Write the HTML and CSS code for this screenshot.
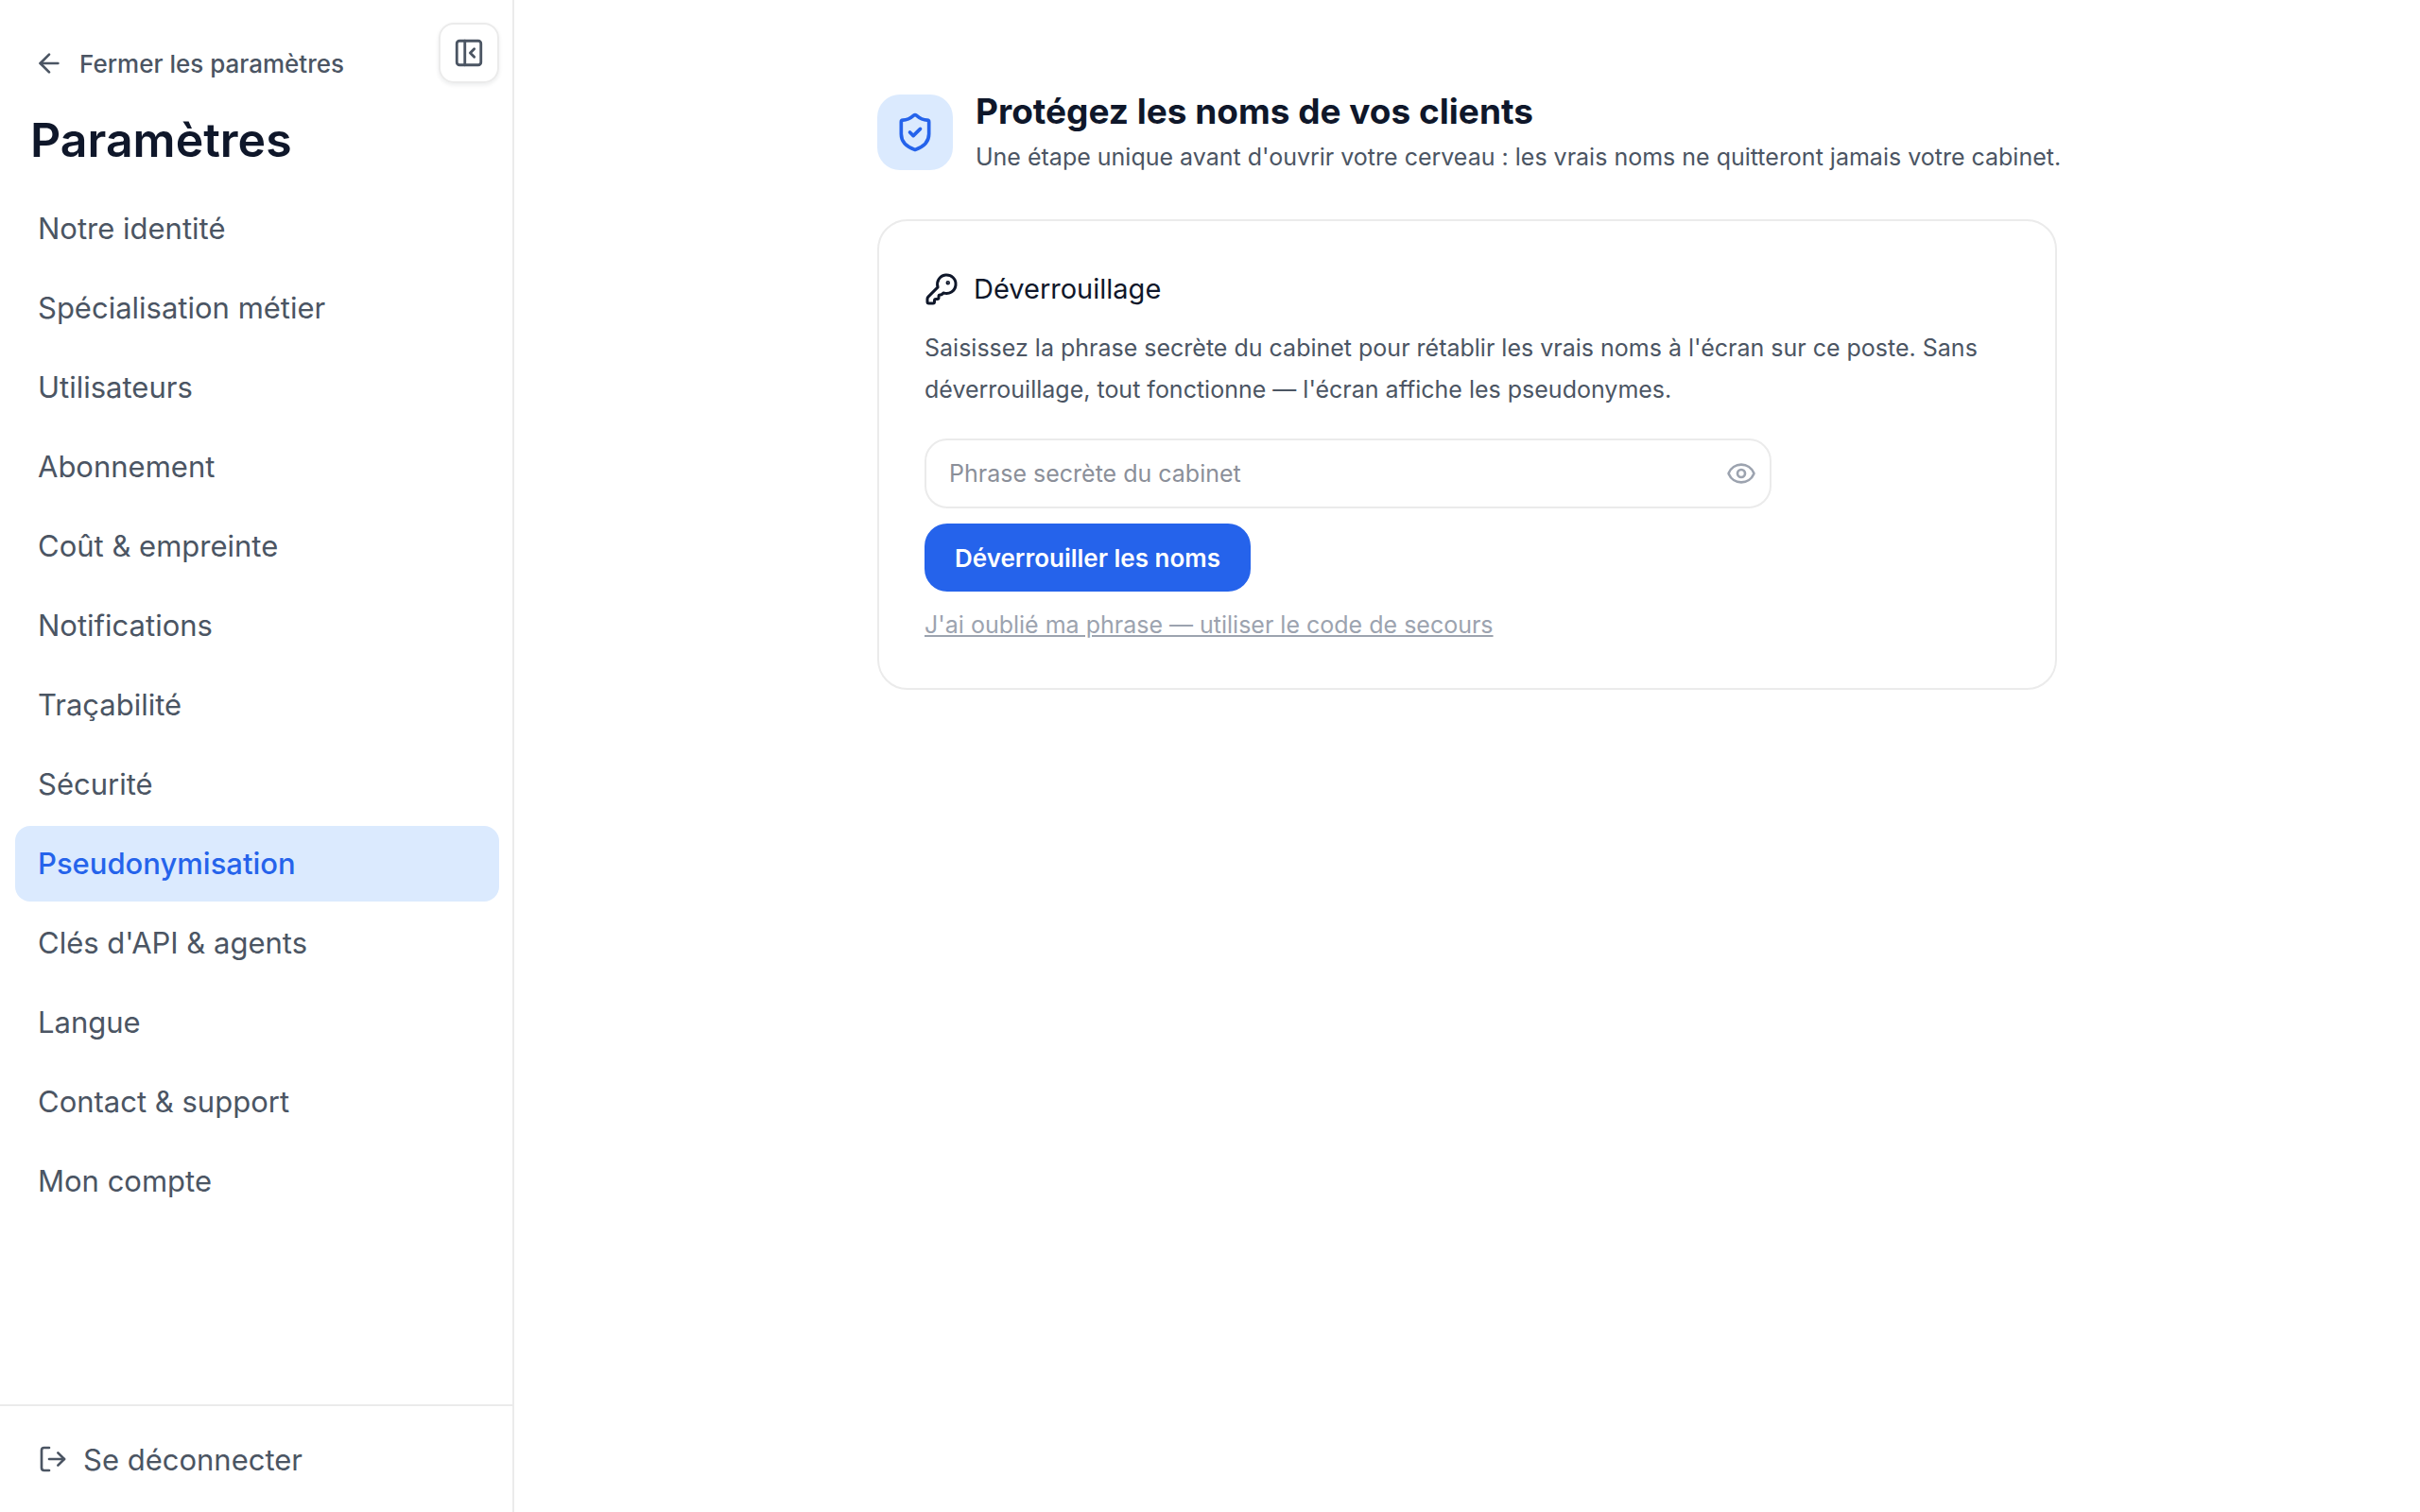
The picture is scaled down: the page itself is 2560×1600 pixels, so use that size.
FILE: index.html
```html
<!DOCTYPE html>
<html lang="fr">

<head>
    <meta charset="UTF-8">
    <meta name="viewport" content="width=device-width, initial-scale=1.0">
    <title>Paramètres</title>
    <link rel="stylesheet" href="styles.css">
</head>

<body>
    <div class="layout">
        <aside class="sidebar">
            <div class="sidebar-top">
                <a href="#" class="back">
                    <svg class="icon" viewBox="0 0 24 24"><path d="m12 19-7-7 7-7"/><path d="M19 12H5"/></svg>
                    Fermer les paramètres
                </a>
                <button type="button" class="collapse" aria-label="Réduire le menu">
                    <svg class="icon" viewBox="0 0 24 24"><rect x="3" y="3" width="18" height="18" rx="2"/><path d="M9 3v18"/><path d="m16 15-3-3 3-3"/></svg>
                </button>
            </div>
            <h1>Paramètres</h1>
            <nav class="menu">
                <a href="#">Notre identité</a>
                <a href="#">Spécialisation métier</a>
                <a href="#">Utilisateurs</a>
                <a href="#">Abonnement</a>
                <a href="#">Coût &amp; empreinte</a>
                <a href="#">Notifications</a>
                <a href="#">Traçabilité</a>
                <a href="#">Sécurité</a>
                <a href="#" class="active" aria-current="page">Pseudonymisation</a>
                <a href="#">Clés d'API &amp; agents</a>
                <a href="#">Langue</a>
                <a href="#">Contact &amp; support</a>
                <a href="#">Mon compte</a>
            </nav>
            <div class="sidebar-bottom">
                <button type="button" class="logout">
                    <svg class="icon" viewBox="0 0 24 24"><path d="M9 21H5a2 2 0 0 1-2-2V5a2 2 0 0 1 2-2h4"/><path d="m16 17 5-5-5-5"/><path d="M21 12H9"/></svg>
                    Se déconnecter
                </button>
            </div>
        </aside>
        <main class="content">
            <div class="page">
                <header class="page-header">
                    <div class="badge">
                        <svg class="icon" viewBox="0 0 24 24"><path d="M20 13c0 5-3.5 7.5-7.66 8.95a1 1 0 0 1-.67-.01C7.5 20.5 4 18 4 13V6a1 1 0 0 1 1-1c2 0 4.5-1.2 6.24-2.72a1.17 1.17 0 0 1 1.52 0C14.51 3.81 17 5 19 5a1 1 0 0 1 1 1z"/><path d="m9 12 2 2 4-4"/></svg>
                    </div>
                    <div class="page-title">
                        <h2>Protégez les noms de vos clients</h2>
                        <p>Une étape unique avant d'ouvrir votre cerveau : les vrais noms ne quitteront jamais votre cabinet.</p>
                    </div>
                </header>
                <section class="card">
                    <h3>
                        <svg class="icon" viewBox="0 0 24 24"><path d="M2.586 17.414A2 2 0 0 0 2 18.828V21a1 1 0 0 0 1 1h3a1 1 0 0 0 1-1v-1a1 1 0 0 1 1-1h1a1 1 0 0 0 1-1v-1a1 1 0 0 1 1-1h.172a2 2 0 0 0 1.414-.586l.814-.814a6.5 6.5 0 1 0-4-4z"/><circle cx="16.5" cy="7.5" r=".5" fill="currentColor"/></svg>
                        Déverrouillage
                    </h3>
                    <p class="help">Saisissez la phrase secrète du cabinet pour rétablir les vrais noms à l'écran sur ce poste. Sans déverrouillage, tout fonctionne — l'écran affiche les pseudonymes.</p>
                    <form class="unlock">
                        <div class="field">
                            <input type="password" name="phrase" placeholder="Phrase secrète du cabinet" aria-label="Phrase secrète du cabinet">
                            <button type="button" class="reveal" aria-label="Afficher la phrase">
                                <svg class="icon" viewBox="0 0 24 24"><path d="M2.062 12.348a1 1 0 0 1 0-.696 10.75 10.75 0 0 1 19.876 0 1 1 0 0 1 0 .696 10.75 10.75 0 0 1-19.876 0"/><circle cx="12" cy="12" r="3"/></svg>
                            </button>
                        </div>
                        <button type="submit" class="submit">Déverrouiller les noms</button>
                        <a href="#" class="forgot">J'ai oublié ma phrase — utiliser le code de secours</a>
                    </form>
                </section>
            </div>
        </main>
    </div>
</body>

</html>
```
FILE: styles.css
```css
* {
    margin: 0;
    padding: 0;
    box-sizing: border-box;
}

body {
    font-family: Inter, "Liberation Sans", sans-serif;
    font-size: 25px;
    color: #4b5563;
    background-color: #fff;
}

a {
    color: inherit;
    text-decoration: none;
}

button,
input {
    font: inherit;
    color: inherit;
    background: none;
    border: none;
}

button {
    cursor: pointer;
}

.icon {
    width: 32px;
    height: 32px;
    flex-shrink: 0;
    fill: none;
    stroke: currentColor;
    stroke-width: 2;
    stroke-linecap: round;
    stroke-linejoin: round;
}

.layout {
    display: flex;
    min-height: 100vh;
}

/* sidebar */
.sidebar {
    display: flex;
    flex-direction: column;
    width: 544px;
    flex-shrink: 0;
    border-right: 2px solid #ebebeb;
}

.sidebar-top {
    display: flex;
    justify-content: space-between;
    padding: 24px 14px 0 36px;
}

.back {
    display: flex;
    align-items: center;
    gap: 16px;
    height: 86px;
    font-size: 26px;
    font-weight: 500;
}

.collapse {
    display: flex;
    align-items: center;
    justify-content: center;
    width: 64px;
    height: 64px;
    border: 2px solid #ebebeb;
    border-radius: 16px;
    box-shadow: 0 2px 4px rgba(15, 23, 42, 0.08);
}

.collapse .icon {
    width: 34px;
    height: 34px;
}

h1 {
    padding: 0 32px;
    font-size: 50px;
    font-weight: 600;
    line-height: 76px;
    color: #0f172a;
}

.menu {
    display: flex;
    flex-direction: column;
    flex: 1;
    gap: 4px;
    padding: 16px 14px 16px 16px;
}

.menu a {
    padding: 0 24px;
    border-radius: 16px;
    font-size: 31px;
    line-height: 80px;
}

.menu a.active {
    background-color: #dbeafe;
    color: #2563eb;
    font-weight: 500;
}

.sidebar-bottom {
    padding: 16px;
    border-top: 2px solid #ebebeb;
}

.logout {
    display: flex;
    align-items: center;
    gap: 16px;
    width: 100%;
    height: 80px;
    padding: 0 24px;
    font-size: 31px;
}

/* content */
.content {
    flex: 1;
    padding: 92px 64px;
}

.page {
    max-width: 1248px;
    margin: 0 auto;
}

.page-header {
    display: flex;
    align-items: center;
    gap: 24px;
}

.badge {
    display: flex;
    align-items: center;
    justify-content: center;
    width: 80px;
    height: 80px;
    flex-shrink: 0;
    border-radius: 24px;
    background-color: #dbeafe;
    color: #2563eb;
}

.badge .icon {
    width: 44px;
    height: 44px;
}

h2 {
    font-size: 37px;
    font-weight: 700;
    line-height: 52px;
    color: #0f172a;
}

.page-title p {
    line-height: 44px;
    white-space: nowrap;
}

.card {
    margin-top: 44px;
    padding: 48px;
    border: 2px solid #ebebeb;
    border-radius: 32px;
}

h3 {
    display: flex;
    align-items: center;
    gap: 16px;
    font-size: 29px;
    font-weight: 400;
    line-height: 48px;
    color: #0f172a;
}

h3 .icon {
    width: 36px;
    height: 36px;
}

.help {
    margin-top: 16px;
    line-height: 44px;
}

.unlock {
    display: flex;
    flex-direction: column;
    align-items: flex-start;
    gap: 16px;
    margin-top: 30px;
}

.field {
    position: relative;
    width: 100%;
    max-width: 896px;
}

.field input {
    width: 100%;
    height: 74px;
    padding: 0 64px 0 24px;
    border: 2px solid #ebebeb;
    border-radius: 24px;
}

.field input::placeholder {
    color: #8b8f99;
}

.reveal {
    position: absolute;
    top: 0;
    right: 16px;
    display: flex;
    align-items: center;
    height: 100%;
    color: #9ca3af;
}

.submit {
    height: 72px;
    padding: 0 32px;
    border-radius: 24px;
    background-color: #2563eb;
    color: #fff;
    font-size: 26px;
    font-weight: 600;
}

.forgot {
    line-height: 38px;
    color: #9ca3af;
    text-decoration: underline;
}
```
